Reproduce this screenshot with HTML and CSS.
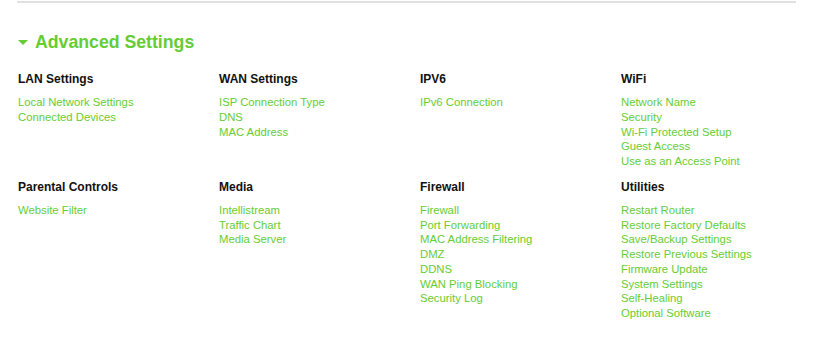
FILE: index.html
```html
<!DOCTYPE html>
<html lang="en">
<head>
    <meta charset="UTF-8">
    <title>Advanced Settings</title>
    <link rel="stylesheet" href="styles.css">
</head>
<body>
<div class="page">
    <div class="adv-title"><span class="adv-arrow"></span>Advanced Settings</div>
    <div class="adv-grid">
        <div class="adv-group">
            <div class="adv-head">LAN Settings</div>
            <a class="adv-link" href="#">Local Network Settings</a>
            <a class="adv-link" href="#">Connected Devices</a>
        </div>
        <div class="adv-group">
            <div class="adv-head">WAN Settings</div>
            <a class="adv-link" href="#">ISP Connection Type</a>
            <a class="adv-link" href="#">DNS</a>
            <a class="adv-link" href="#">MAC Address</a>
        </div>
        <div class="adv-group">
            <div class="adv-head">IPV6</div>
            <a class="adv-link" href="#">IPv6 Connection</a>
        </div>
        <div class="adv-group">
            <div class="adv-head">WiFi</div>
            <a class="adv-link" href="#">Network Name</a>
            <a class="adv-link" href="#">Security</a>
            <a class="adv-link" href="#">Wi-Fi Protected Setup</a>
            <a class="adv-link" href="#">Guest Access</a>
            <a class="adv-link" href="#">Use as an Access Point</a>
        </div>
        <div class="adv-group">
            <div class="adv-head">Parental Controls</div>
            <a class="adv-link" href="#">Website Filter</a>
        </div>
        <div class="adv-group">
            <div class="adv-head">Media</div>
            <a class="adv-link" href="#">Intellistream</a>
            <a class="adv-link" href="#">Traffic Chart</a>
            <a class="adv-link" href="#">Media Server</a>
        </div>
        <div class="adv-group">
            <div class="adv-head">Firewall</div>
            <a class="adv-link" href="#">Firewall</a>
            <a class="adv-link" href="#">Port Forwarding</a>
            <a class="adv-link" href="#">MAC Address Filtering</a>
            <a class="adv-link" href="#">DMZ</a>
            <a class="adv-link" href="#">DDNS</a>
            <a class="adv-link" href="#">WAN Ping Blocking</a>
            <a class="adv-link" href="#">Security Log</a>
        </div>
        <div class="adv-group">
            <div class="adv-head">Utilities</div>
            <a class="adv-link" href="#">Restart Router</a>
            <a class="adv-link" href="#">Restore Factory Defaults</a>
            <a class="adv-link" href="#">Save/Backup Settings</a>
            <a class="adv-link" href="#">Restore Previous Settings</a>
            <a class="adv-link" href="#">Firmware Update</a>
            <a class="adv-link" href="#">System Settings</a>
            <a class="adv-link" href="#">Self-Healing</a>
            <a class="adv-link" href="#">Optional Software</a>
        </div>
    </div>
</div>
</body>
</html>
```
FILE: styles.css
```css
body {
    margin: 0;
    background: #ffffff;
    font-family: "Liberation Sans", Arial, sans-serif;
}

.page {
    margin: 1px 44px 0 17px;
    border-top: 2px solid #e0e0e0;
    padding: 28px 0 0 1px;
}

.adv-title {
    display: flex;
    align-items: center;
    gap: 7px;
    color: #66cc33;
    font-size: 17.7px;
    font-weight: bold;
    line-height: 22px;
}

.adv-arrow {
    width: 0;
    height: 0;
    border-left: 5px solid transparent;
    border-right: 5px solid transparent;
    border-top: 5px solid #66cc33;
}

.adv-grid {
    display: grid;
    grid-template-columns: repeat(4, 201px);
    row-gap: 10px;
    margin-top: 18px;
}

.adv-group {
    display: flex;
    flex-direction: column;
}

.adv-head {
    color: #111111;
    font-size: 12px;
    font-weight: bold;
    line-height: 16px;
    margin-bottom: 8px;
}

.adv-link {
    color: #66cc33;
    font-size: 11.3px;
    line-height: 14.75px;
    text-decoration: none;
}
```
